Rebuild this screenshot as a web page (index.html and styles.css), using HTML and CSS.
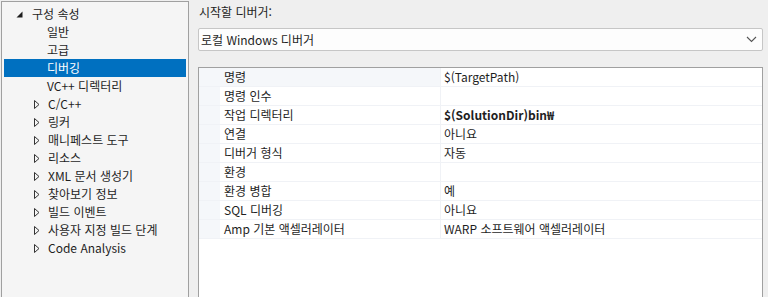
FILE: index.html
```html
<!DOCTYPE html>
<html lang="ko">

<head>
    <meta charset="UTF-8">
    <meta name="viewport" content="width=device-width, initial-scale=1.0">
    <title>디버깅 속성</title>
    <link rel="stylesheet" href="styles.css">
</head>

<body>
    <div class="page">
        <!-- 왼쪽 트리 -->
        <div class="tree">
            <div class="node root"><svg class="arrow open" width="7" height="7" viewBox="0 0 7 7"><path d="M6.5 0.5 L6.5 6.5 L0.5 6.5 Z" fill="#1e1e1e"/></svg>구성 속성</div>
            <div class="node leaf">일반</div>
            <div class="node leaf">고급</div>
            <div class="node leaf active">디버깅</div>
            <div class="node leaf">VC++ 디렉터리</div>
            <div class="node"><svg class="arrow" width="6" height="9" viewBox="0 0 6 9"><path d="M0.5 0.5 L5 4.5 L0.5 8.5 Z" fill="none" stroke="#333"/></svg>C/C++</div>
            <div class="node"><svg class="arrow" width="6" height="9" viewBox="0 0 6 9"><path d="M0.5 0.5 L5 4.5 L0.5 8.5 Z" fill="none" stroke="#333"/></svg>링커</div>
            <div class="node"><svg class="arrow" width="6" height="9" viewBox="0 0 6 9"><path d="M0.5 0.5 L5 4.5 L0.5 8.5 Z" fill="none" stroke="#333"/></svg>매니페스트 도구</div>
            <div class="node"><svg class="arrow" width="6" height="9" viewBox="0 0 6 9"><path d="M0.5 0.5 L5 4.5 L0.5 8.5 Z" fill="none" stroke="#333"/></svg>리소스</div>
            <div class="node"><svg class="arrow" width="6" height="9" viewBox="0 0 6 9"><path d="M0.5 0.5 L5 4.5 L0.5 8.5 Z" fill="none" stroke="#333"/></svg>XML 문서 생성기</div>
            <div class="node"><svg class="arrow" width="6" height="9" viewBox="0 0 6 9"><path d="M0.5 0.5 L5 4.5 L0.5 8.5 Z" fill="none" stroke="#333"/></svg>찾아보기 정보</div>
            <div class="node"><svg class="arrow" width="6" height="9" viewBox="0 0 6 9"><path d="M0.5 0.5 L5 4.5 L0.5 8.5 Z" fill="none" stroke="#333"/></svg>빌드 이벤트</div>
            <div class="node"><svg class="arrow" width="6" height="9" viewBox="0 0 6 9"><path d="M0.5 0.5 L5 4.5 L0.5 8.5 Z" fill="none" stroke="#333"/></svg>사용자 지정 빌드 단계</div>
            <div class="node"><svg class="arrow" width="6" height="9" viewBox="0 0 6 9"><path d="M0.5 0.5 L5 4.5 L0.5 8.5 Z" fill="none" stroke="#333"/></svg>Code Analysis</div>
        </div>

        <!-- 오른쪽 속성 -->
        <div class="main">
            <p class="label">시작할 디버거:</p>
            <div class="select">
                <span>로컬 Windows 디버거</span>
                <svg class="chev" width="11" height="7" viewBox="0 0 11 7">
                    <path d="M1 1 L5.5 5.5 L10 1" fill="none" stroke="#555" stroke-width="1.1"/>
                </svg>
            </div>
            <div class="grid">
                <div class="row first"><div class="gut"></div><div class="name">명령</div><div class="val">$(TargetPath)</div></div>
                <div class="row"><div class="gut"></div><div class="name">명령 인수</div><div class="val"></div></div>
                <div class="row"><div class="gut"></div><div class="name">작업 디렉터리</div><div class="val bold">$(SolutionDir)bin₩</div></div>
                <div class="row"><div class="gut"></div><div class="name">연결</div><div class="val">아니요</div></div>
                <div class="row"><div class="gut"></div><div class="name">디버거 형식</div><div class="val">자동</div></div>
                <div class="row"><div class="gut"></div><div class="name">환경</div><div class="val"></div></div>
                <div class="row"><div class="gut"></div><div class="name">환경 병합</div><div class="val">예</div></div>
                <div class="row"><div class="gut"></div><div class="name">SQL 디버깅</div><div class="val">아니요</div></div>
                <div class="row"><div class="gut"></div><div class="name">Amp 기본 액셀러레이터</div><div class="val">WARP 소프트웨어 액셀러레이터</div></div>
                <div class="rest"><div class="gut"></div></div>
            </div>
        </div>
    </div>
</body>

</html>
```

FILE: styles.css
```css
* {
    padding: 0;
    margin: 0;
    box-sizing: border-box;
}

body {
    background-color: #efefef;
    font-family: "Noto Sans CJK KR", sans-serif;
    font-size: 12px;
    color: #1e1e1e;
    overflow: hidden;
}

.page {
    display: flex;
    height: 297px;
    padding: 1px 0 0 1px;
}

/* 트리 */
.tree {
    width: 188px;
    height: 100%;
    padding: 3px 2px 0 2px;
    background-color: #f5f5f5;
    border: 1px solid #a0a0a0;
    border-bottom: none;
}

.node {
    display: flex;
    align-items: center;
    height: 18px;
    line-height: 18px;
    padding-left: 30px;
    white-space: nowrap;
}

.node.root {
    padding-left: 12px;
}

.node.leaf {
    padding-left: 43px;
}

.node.active {
    background-color: #0070c0;
    color: #fff;
}

.arrow {
    margin-right: 8px;
}

.arrow.open {
    margin-right: 9px;
}

/* 오른쪽 */
.main {
    flex: 1;
    padding: 2px 5px 0 9px;
}

.label {
    height: 18px;
    line-height: 18px;
    padding-left: 1px;
}

.select {
    display: flex;
    align-items: center;
    justify-content: space-between;
    height: 23px;
    margin-top: 7px;
    padding: 0 5px 0 2px;
    background-color: #fdfdfd;
    border: 1px solid #c6c6c6;
    border-radius: 2px;
}

.grid {
    margin-top: 16px;
    height: 240px;
    background-color: #fff;
    border: 1px solid #a0a0a0;
    border-bottom: none;
}

.row {
    display: flex;
    height: 19px;
    line-height: 18px;
    border-bottom: 1px solid #f0f2f6;
}

.gut {
    width: 21px;
    background-color: #f5f7fa;
}

.name {
    width: 221px;
    padding-left: 4px;
    border-right: 1px solid #f0f2f6;
}

.first .name {
    background-color: #f5f7fa;
}

.val {
    flex: 1;
    padding-left: 3px;
    white-space: nowrap;
}

.val.bold {
    font-weight: bold;
}

.rest {
    height: 60px;
}

.rest .gut {
    height: 100%;
    background-color: #fff;
}
```
